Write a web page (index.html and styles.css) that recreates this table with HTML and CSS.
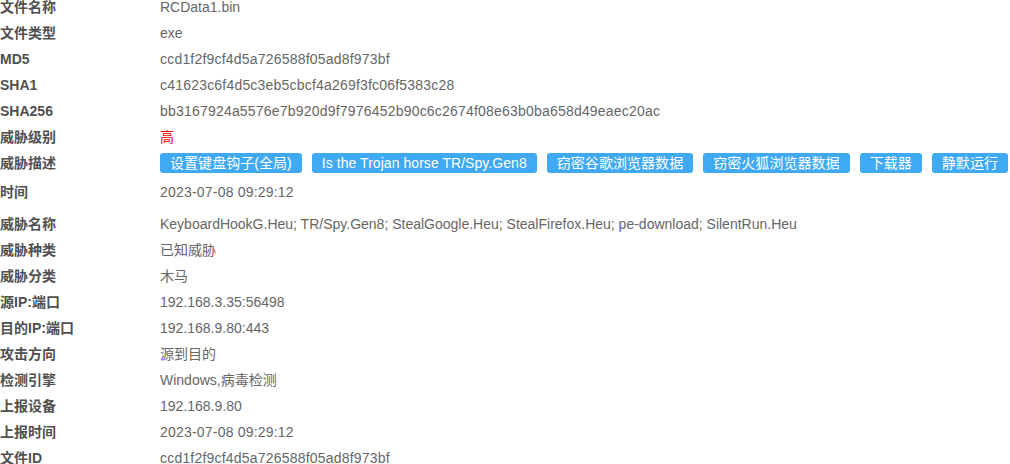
FILE: index.html
```html
<!DOCTYPE html>
<html lang="zh-CN">
<head>
  <meta charset="UTF-8">
  <title>文件详情</title>
  <link rel="stylesheet" href="styles.css">
</head>
<body>
  <div class="detail">
    <div class="row"><div class="label">文件名称</div><div class="value">RCData1.bin</div></div>
    <div class="row"><div class="label">文件类型</div><div class="value">exe</div></div>
    <div class="row"><div class="label">MD5</div><div class="value num">ccd1f2f9cf4d5a726588f05ad8f973bf</div></div>
    <div class="row"><div class="label">SHA1</div><div class="value num">c41623c6f4d5c3eb5cbcf4a269f3fc06f5383c28</div></div>
    <div class="row"><div class="label">SHA256</div><div class="value num">bb3167924a5576e7b920d9f7976452b90c6c2674f08e63b0ba658d49eaec20ac</div></div>
    <div class="row"><div class="label">威胁级别</div><div class="value level-high">高</div></div>
    <div class="row row-tags">
      <div class="label">威胁描述</div>
      <div class="value tags">
        <span class="tag">设置键盘钩子(全局)</span>
        <span class="tag">Is the Trojan horse TR/Spy.Gen8</span>
        <span class="tag">窃密谷歌浏览器数据</span>
        <span class="tag">窃密火狐浏览器数据</span>
        <span class="tag">下载器</span>
        <span class="tag">静默运行</span>
      </div>
    </div>
    <div class="row row-time"><div class="label">时间</div><div class="value num">2023-07-08 09:29:12</div></div>
    <div class="row"><div class="label">威胁名称</div><div class="value">KeyboardHookG.Heu; TR/Spy.Gen8; StealGoogle.Heu; StealFirefox.Heu; pe-download; SilentRun.Heu</div></div>
    <div class="row"><div class="label">威胁种类</div><div class="value">已知威胁</div></div>
    <div class="row"><div class="label">威胁分类</div><div class="value">木马</div></div>
    <div class="row"><div class="label">源IP:端口</div><div class="value">192.168.3.35:56498</div></div>
    <div class="row"><div class="label">目的IP:端口</div><div class="value">192.168.9.80:443</div></div>
    <div class="row"><div class="label">攻击方向</div><div class="value">源到目的</div></div>
    <div class="row"><div class="label">检测引擎</div><div class="value">Windows,病毒检测</div></div>
    <div class="row"><div class="label">上报设备</div><div class="value">192.168.9.80</div></div>
    <div class="row"><div class="label">上报时间</div><div class="value num">2023-07-08 09:29:12</div></div>
    <div class="row"><div class="label">文件ID</div><div class="value num">ccd1f2f9cf4d5a726588f05ad8f973bf</div></div>
  </div>
</body>
</html>
```

FILE: styles.css
```css
body {
  margin: 0;
  background: #fff;
  font-family: "Liberation Sans", Arial, "Noto Sans CJK SC", sans-serif;
  font-size: 14px;
  overflow: hidden;
}
.detail {
  margin-top: -6px;
}
.row {
  display: flex;
  align-items: center;
  height: 26px;
  line-height: 26px;
  white-space: nowrap;
}
.label {
  width: 160px;
  flex-shrink: 0;
  font-weight: bold;
  color: #505050;
}
.value {
  color: #666;
}
.num { letter-spacing: 0.2px; }
.level-high { color: #f00; }
.row-tags { margin-bottom: 3px; }
.row-time { margin-bottom: 6px; }
.tags {
  display: flex;
  gap: 10px;
}
.tag {
  display: inline-block;
  height: 20px;
  line-height: 20px;
  padding: 0 10px;
  background: #40a9f3;
  color: #fff;
  border-radius: 3px;
  letter-spacing: 0.05px;
}
```
